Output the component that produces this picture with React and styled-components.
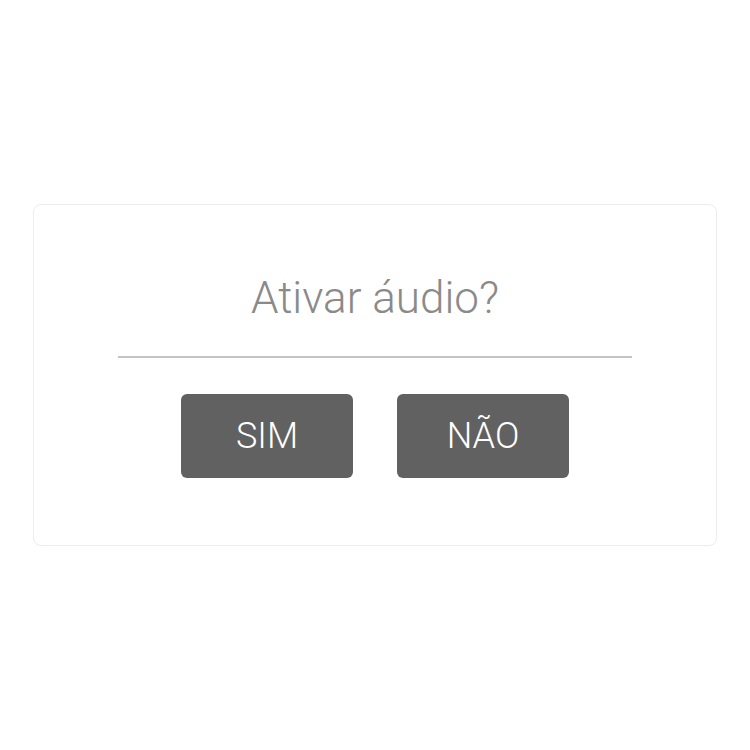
import React from 'react';
import styled, { createGlobalStyle } from "styled-components";

const GlobalStyle = createGlobalStyle`
  html, body {
    margin: 0;
    padding: 0;
    background: #ffffff;
  }
  body {
    font-family: Roboto, "Liberation Sans", sans-serif;
  }
`

const Page = styled.div`
  width: 750px;
  height: 750px;
  display: flex;
  align-items: center;
  justify-content: center;
`

const Card = styled.div`
  box-sizing: border-box;
  width: 684px;
  height: 342px;
  border: 1px solid #ececec;
  border-radius: 8px;
  background: #ffffff;
  display: flex;
  flex-direction: column;
  align-items: center;
  padding-top: 71px;
`

const Title = styled.div`
  font-family: Roboto, "Liberation Sans", sans-serif;
  font-weight: 300;
  font-size: 44px;
  line-height: 44px;
  color: #8a8a8a;
`

const Divider = styled.div`
  width: 514px;
  height: 2px;
  background: #c4c4c4;
  margin-top: 36px;
`

const Actions = styled.div`
  display: flex;
  gap: 44px;
  margin-top: 36px;
`

const Button = styled.button`
  width: 172px;
  height: 84px;
  border: none;
  border-radius: 6px;
  background: #616161;
  color: #ffffff;
  font-family: Roboto, "Liberation Sans", sans-serif;
  font-weight: 300;
  font-size: 36px;
  cursor: pointer;
  padding: 0;
`

const App = () => {
    return (
        <Page>
            <GlobalStyle/>
            <Card>
                <Title>Ativar áudio?</Title>
                <Divider/>
                <Actions>
                    <Button>SIM</Button>
                    <Button>NÃO</Button>
                </Actions>
            </Card>
        </Page>
    );
};

export default App;
